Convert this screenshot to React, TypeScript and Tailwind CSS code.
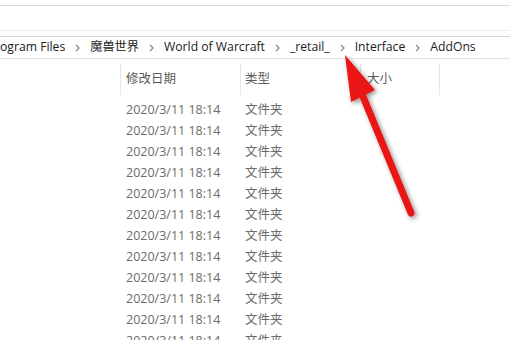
import React from "react";

const crumbs = ["ogram Files", "魔兽世界", "World of Warcraft", "_retail_", "Interface", "AddOns"];

function Chevron() {
    return (
        <span className="flex w-[25px] shrink-0 items-center justify-center">
            <svg width="5" height="8" viewBox="0 0 5 8">
                <path d="M1 1 L4 4 L1 7" fill="none" stroke="#8a8a8a" strokeWidth="1.3" />
            </svg>
        </span>
    );
}

export default function App() {
    const rows = Array.from({ length: 12 });

    return (
        <div
            className="relative h-[340px] w-[510px] overflow-hidden bg-white text-[12.5px]"
            style={{ fontFamily: '"Open Sans", "Noto Sans CJK SC", sans-serif' }}
        >
            {/* top chrome */}
            <div className="h-[6px] border-b border-[#dadada]" />
            <div className="h-[25px] border-b border-[#ececec]" />
            <div className="h-[6px] border-b border-[#d6d6d6]" />

            {/* breadcrumb */}
            <div className="flex h-[22px] items-center whitespace-nowrap border-b border-[#e2e2e2] text-[12.2px] text-[#1b1b1b]">
                {crumbs.map((c, i) => (
                    <React.Fragment key={c}>
                        {i > 0 && <Chevron />}
                        <span>{c}</span>
                    </React.Fragment>
                ))}
            </div>

            {/* column headers */}
            <div className="mt-[5px] flex h-[31px] items-center text-[#5a5a5a]">
                <div className="w-[120px]" />
                <div className="flex h-full w-[120px] items-center border-l border-[#e5e5e5] pl-[5px]">修改日期</div>
                <div className="flex h-full w-[120px] items-center border-l border-[#e5e5e5] pl-[4px]">类型</div>
                <div className="flex h-full w-[79px] items-center border-l border-[#e5e5e5] pl-[6px]">大小</div>
                <div className="h-full border-l border-[#e5e5e5]" />
            </div>

            {/* rows */}
            <div className="mt-[5px] flex flex-col text-[#6b6b6b]">
                {rows.map((_, i) => (
                    <div key={i} className="flex h-[21px] shrink-0 items-center">
                        <div className="w-[126px]" />
                        <div className="w-[119px]">2020/3/11 18:14</div>
                        <div>文件夹</div>
                    </div>
                ))}
            </div>

            {/* red arrow annotation */}
            <svg className="pointer-events-none absolute left-0 top-0" width="510" height="340" viewBox="0 0 510 340">
                <defs>
                    <filter id="sh" x="-50%" y="-50%" width="200%" height="200%">
                        <feGaussianBlur in="SourceAlpha" stdDeviation="2.5" />
                        <feOffset dx="2" dy="2" result="b" />
                        <feComponentTransfer>
                            <feFuncA type="linear" slope="0.45" />
                        </feComponentTransfer>
                        <feMerge>
                            <feMergeNode />
                            <feMergeNode in="SourceGraphic" />
                        </feMerge>
                    </filter>
                </defs>
                <g filter="url(#sh)">
                    <line x1="362" y1="94" x2="411" y2="213" stroke="#ea1212" strokeWidth="7" strokeLinecap="round" />
                    <polygon points="345,55 375,90 351,102" fill="#ea1212" />
                </g>
            </svg>
        </div>
    );
}
